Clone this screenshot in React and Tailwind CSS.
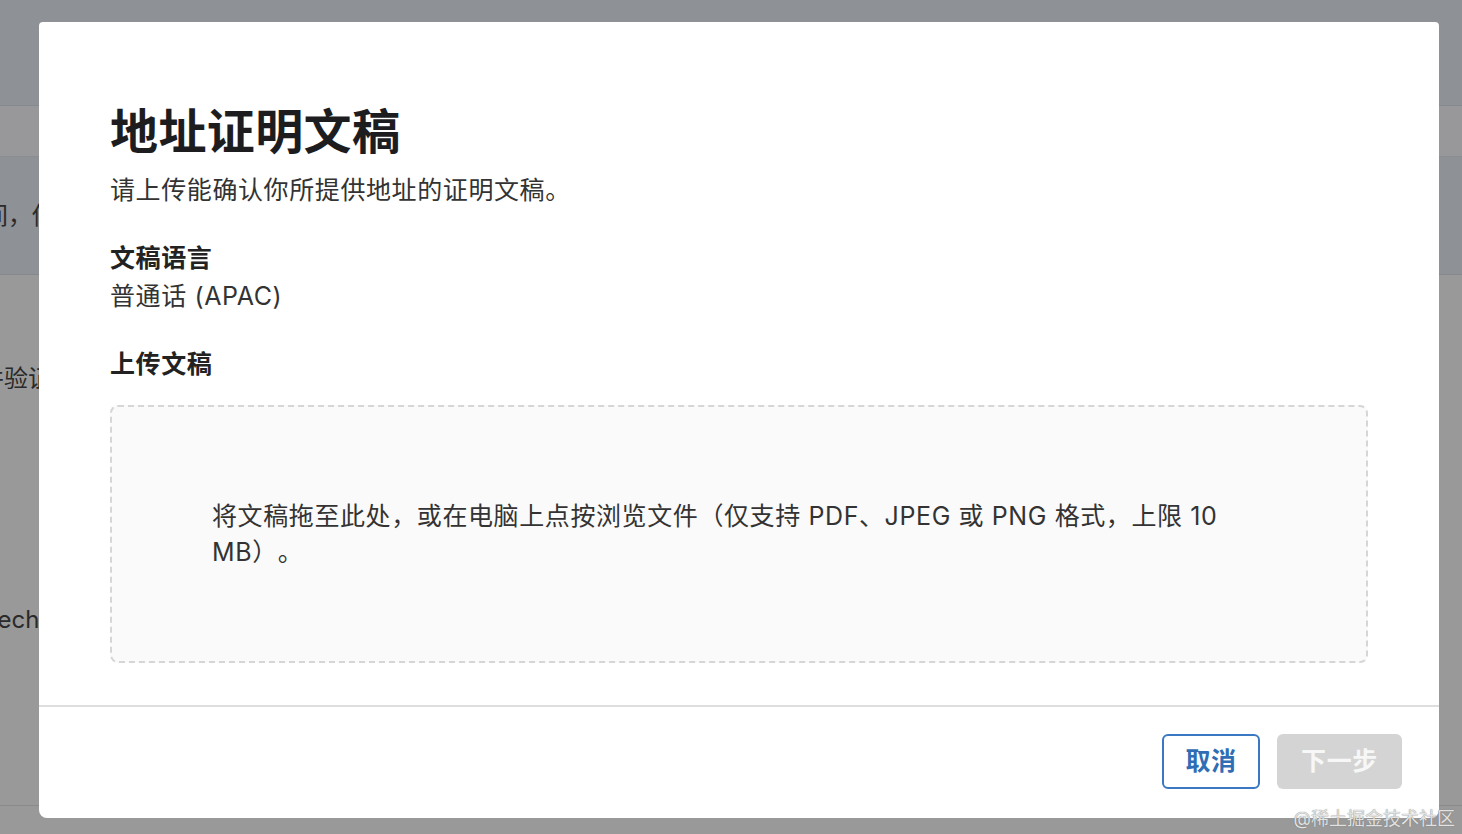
import React from "react";

const font = "font-['Inter','Noto_Sans_CJK_SC',sans-serif] [text-spacing-trim:space-all]";

const Backdrop = () => (
  <div className="flex flex-col h-[834px] w-full text-[24px] text-[#2a2a2a]">
    <div className="h-[106px] bg-[#8e9196] border-b border-[#86898e]" />
    <div className="h-[51px] bg-[#98989a] border-b border-[#8a8d92]" />
    <div className="h-[118px] bg-[#8e9196] border-b border-[#85888c] flex items-center">
      <span className="ml-[-16px] leading-[32px]">间，你的</span>
    </div>
    <div className="flex-1 bg-[#999999] border-b border-[#8a8a8a] flex flex-col">
      <span className="mt-[88px] ml-[-20px] leading-[32px]">并验证</span>
      <span className="mt-[209px] ml-[-10px] leading-[32px]">tech</span>
    </div>
    <div className="h-[28px] bg-[#999999]" />
  </div>
);

const AddressProofModal = () => (
  <div className="absolute inset-0">
    <div className="ml-[39px] mt-[22px] w-[1400px] h-[796px] bg-white rounded-b-lg rounded-t-sm flex flex-col">
      <div className="px-[71px] pt-[82px] flex flex-col">
        <h1 className="text-[48px] leading-[56px] font-bold text-[#1d1d1f] tracking-[0.4px]">地址证明文稿</h1>
        <p className="mt-[14px] text-[25px] leading-[32px] text-[#333333] tracking-[0.6px]">
          请上传能确认你所提供地址的证明文稿。
        </p>
        <h2 className="mt-[36px] text-[25px] leading-[32px] font-semibold text-[#222222] tracking-[0.6px]">文稿语言</h2>
        <p className="mt-[6px] text-[25px] leading-[32px] text-[#333333] tracking-[0.6px]">普通话 (APAC)</p>
        <h2 className="mt-[36px] text-[25px] leading-[32px] font-semibold text-[#222222] tracking-[0.6px]">上传文稿</h2>
        <div className="mt-[25px] h-[258px] rounded-lg border-2 border-dashed border-[#d6d6d6] bg-[#fafafa] flex items-center px-[100px]">
          <p className="text-[25px] leading-[36px] text-[#333333] tracking-[0.6px]">
            将文稿拖至此处，或在电脑上点按浏览文件（仅支持 PDF、JPEG 或 PNG 格式，上限 10
            <br />
            MB）。
          </p>
        </div>
      </div>
      <div className="mt-[42px] border-t-2 border-[#dedede]" />
      <div className="flex justify-end gap-[17px] pr-[37px] pt-[27px]">
        <button className="w-[98px] h-[55px] rounded-md border-2 border-[#3b78c3] text-[#2f6db5] text-[25px] font-semibold tracking-[0.6px]">
          取消
        </button>
        <button className="w-[125px] h-[55px] rounded-md bg-[#d4d4d4] text-[#f7f7f7] text-[25px] font-semibold tracking-[0.6px]">
          下一步
        </button>
      </div>
    </div>
  </div>
);

export default function App() {
  return (
    <div className={`relative w-[1462px] h-[834px] overflow-hidden ${font}`}>
      <Backdrop />
      <AddressProofModal />
      <span className="absolute right-[7px] bottom-[4px] text-[18px] leading-[22px] text-[#e2e2e2] [text-shadow:0_0_1px_#666]">
        @稀土掘金技术社区
      </span>
    </div>
  );
}
